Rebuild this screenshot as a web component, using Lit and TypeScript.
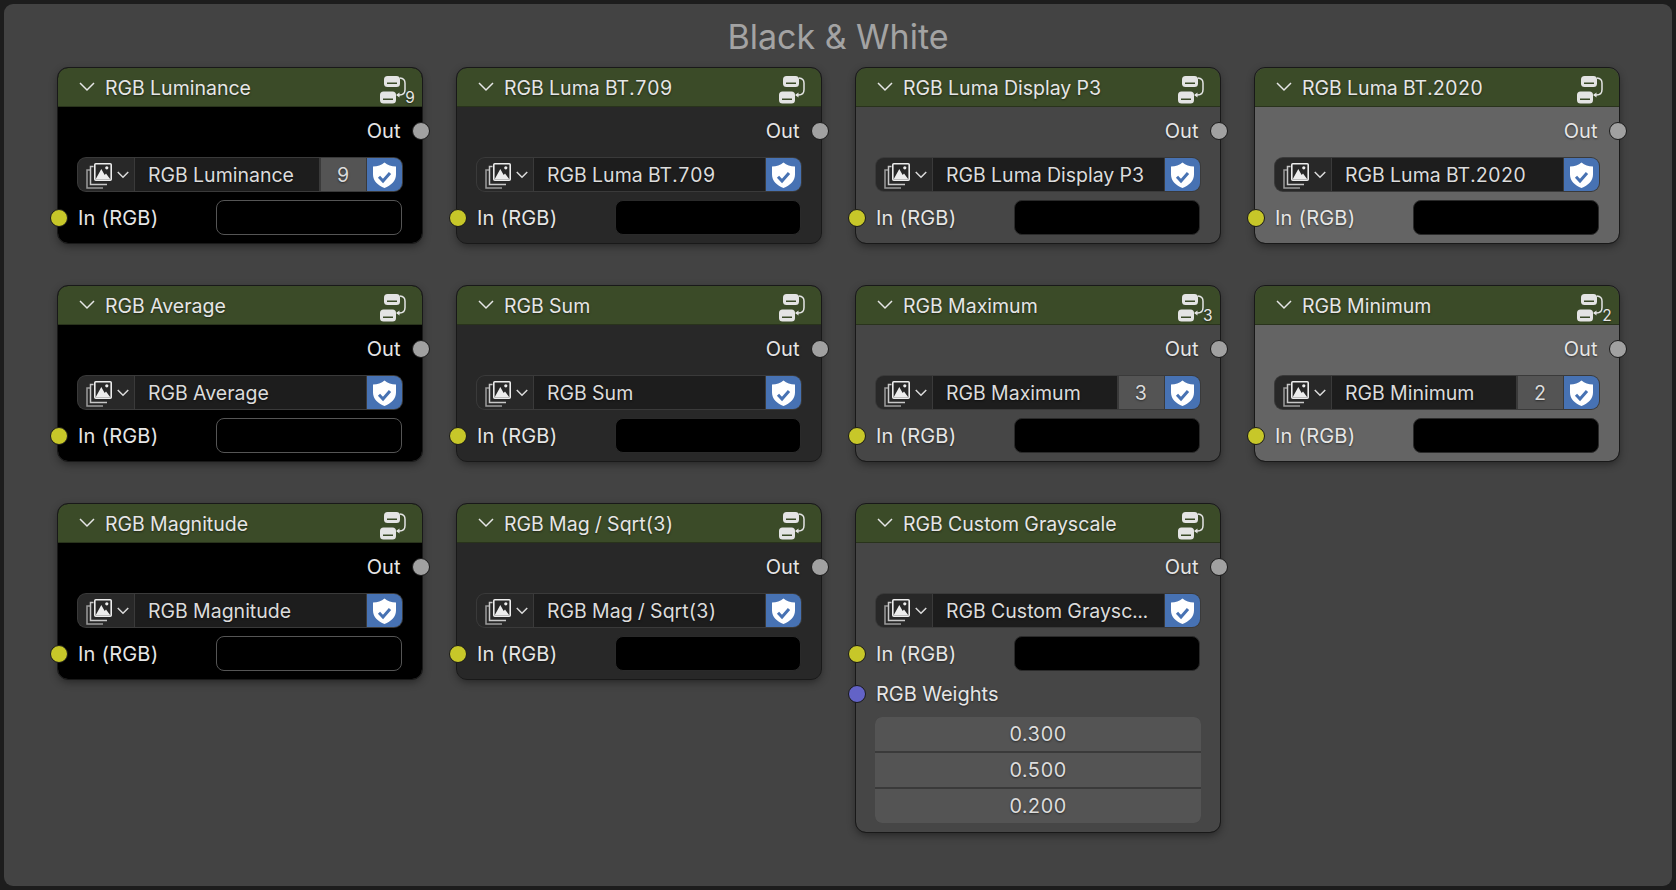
import { LitElement, html, css, svg } from 'lit';
import { customElement, property } from 'lit/decorators.js';

const treeIcon = svg`
  <rect x="5" y="1" width="16" height="11" rx="3.500" fill="#e4e4e4"/>
  <rect x="8" y="7.500" width="10" height="1.500" fill="#3b4b28"/>
  <rect x="1" y="16.500" width="16" height="12" rx="3.500" fill="#e4e4e4"/>
  <rect x="4" y="23.500" width="10" height="1.500" fill="#3b4b28"/>
  <path d="M21 3c3.300.2 5 2.200 5 5.200v6.300c0 3.600-2.300 5.500-5.500 5.500H18" fill="none" stroke="#e4e4e4" stroke-width="1.500"/>
  <path d="M20.500 17.500v5l-3.500-2.500z" fill="#e4e4e4"/>`;

const imageIcon = svg`
  <path d="M4 7H1v18h16" fill="none" stroke="#9c9c9c" stroke-width="1.500"/>
  <path d="M7.500 3.500H4.500v18H21" fill="none" stroke="#c8c8c8" stroke-width="1.500"/>
  <rect x="8.800" y="0.800" width="16.400" height="16.400" rx="1" fill="#282828" stroke="#ededed" stroke-width="1.600"/>
  <path d="M9.500 16.500l5.800-10.500 3.400 6 1.300-1.500 4.500 6z" fill="#ededed"/>
  <circle cx="20.800" cy="4.800" r="1.600" fill="#ededed"/>`;

const shieldIcon = svg`
  <path d="M11.500.5C14.500 3 18.500 4.500 23 4.500v8c0 6.500-5 11-11.500 13.500C5 23.500 0 19 0 12.500v-8C4.500 4.500 8.500 3 11.500.5z" fill="#fff"/>
  <path d="M6 14.800l4 4.200 7-8" fill="none" stroke="#4772b3" stroke-width="3"/>`;

const chevron = svg`<path d="M1 1l7 7 7-7" fill="none" stroke="currentColor" stroke-width="1.500"/>`;

@customElement('rgb-node')
export class RgbNode extends LitElement {
  static styles = css`
    :host {
      display: block;
    }
    .node {
      position: relative;
      border-radius: 10px;
      outline: 1.5px solid #191919;
      box-shadow: 0 3px 9px rgba(0, 0, 0, 0.45);
      color: #e6e6e6;
      font-size: 20px;
      font-variant-numeric: tabular-nums;
      text-shadow: 0 1px 2px rgba(0, 0, 0, 0.5);
    }
    .tone-0 { background: #000; }
    .tone-1 { background: #282828; }
    .tone-2 { background: #464646; }
    .tone-3 { background: #646464; }
    .head {
      height: 39px;
      box-sizing: border-box;
      display: flex;
      align-items: center;
      padding-left: 21px;
      background: #3b4b28;
      border-bottom: 1px solid #29331c;
      border-radius: 10px 10px 0 0;
      font-size: 19.5px;
    }
    .chev {
      width: 16px;
      height: 10px;
      margin-right: 10px;
      flex: none;
    }
    .head-title {
      flex: 1;
      padding-top: 1px;
    }
    .tree {
      width: 28px;
      height: 30px;
      margin-right: 15px;
      margin-top: 5px;
    }
    .users {
      position: absolute;
      top: 22px;
      right: 7px;
      font-size: 15.5px;
      line-height: 16px;
    }
    .body {
      padding: 7px 19.5px 8px 19px;
      display: flex;
      flex-direction: column;
    }
    .row {
      position: relative;
      height: 34px;
      display: flex;
      align-items: center;
    }
    .row.out {
      justify-content: flex-end;
      padding-right: 2px;
    }
    .socket {
      position: absolute;
      width: 16px;
      height: 16px;
      top: 50%;
      margin-top: -9px;
      border: 1px solid #1a1a1a;
      border-radius: 50%;
    }
    .socket.right { right: -27.5px; background: #a1a1a1; }
    .socket.left { left: -27px; background: #c7c729; }
    .socket.vector { background: #6363c7; }
    .picker {
      height: 35px;
      box-sizing: border-box;
      margin-top: 9px;
      padding: 1px;
      display: flex;
      gap: 1px;
      border-radius: 9px;
      background: #3a3a3a;
      color: #dcdcdc;
      font-size: 19.5px;
    }
    .picker > div {
      display: flex;
      align-items: center;
      box-sizing: border-box;
    }
    .pick-icon {
      width: 56px;
      flex: none;
      padding-left: 8px;
      gap: 5px;
      background: #282828;
      border-radius: 8px 0 0 8px;
    }
    .pick-icon .img {
      width: 26px;
      height: 26px;
      flex: none;
      margin-top: 3px;
    }
    .pick-icon .caret {
      width: 12px;
      height: 8px;
      flex: none;
    }
    .caret path {
      stroke-width: 2;
    }
    .pick-name {
      flex: 1;
      min-width: 0;
      padding-left: 13px;
      background: #1d1d1d;
      white-space: nowrap;
    }
    .pick-num {
      width: 45px;
      flex: none;
      justify-content: center;
      background: #545454;
      margin-left: 1px;
    }
    .pick-shield {
      width: 35px;
      flex: none;
      justify-content: center;
      background: #4772b3;
      border-radius: 0 8px 8px 0;
    }
    .pick-shield svg {
      width: 23px;
      height: 26px;
    }
    .in-row {
      height: 35px;
      margin-top: 8px;
      display: flex;
      align-items: center;
      justify-content: space-between;
      padding-left: 1px;
      letter-spacing: 0.2px;
    }
    .swatch {
      width: 186px;
      height: 35px;
      box-sizing: border-box;
      background: #000;
      border: 1.5px solid #2a2a2a;
      border-radius: 8px;
    }
    .tone-0 .swatch {
      border-color: #555;
    }
    .weights-label {
      height: 35px;
      margin-top: 5px;
      padding-left: 1px;
    }
    .weights {
      margin-top: 6px;
      margin-bottom: 1px;
      border-radius: 7px;
      overflow: hidden;
      display: flex;
      flex-direction: column;
      gap: 2px;
      background: #3a3a3a;
      color: #dcdcdc;
    }
    .weights div {
      height: 34px;
      display: flex;
      align-items: center;
      justify-content: center;
      background: #545454;
    }
  `;

  @property() name = '';
  @property() field = '';
  @property({ type: Number }) tone = 0;
  @property({ type: Number }) users = 0;
  @property({ type: Array }) weights: string[] = [];

  render() {
    const label = this.field || this.name;
    return html`
      <div class="node tone-${this.tone}">
        <div class="head">
          <svg class="chev" viewBox="0 0 16 10">${chevron}</svg>
          <span class="head-title">${this.name}</span>
          <svg class="tree" viewBox="0 0 28 30">${treeIcon}</svg>
          ${this.users ? html`<span class="users">${this.users}</span>` : ''}
        </div>
        <div class="body">
          <div class="row out">Out<span class="socket right"></span></div>
          <div class="picker">
            <div class="pick-icon">
              <svg class="img" viewBox="0 0 26 26">${imageIcon}</svg>
              <svg class="caret" viewBox="0 0 16 10">${chevron}</svg>
            </div>
            <div class="pick-name">${label}</div>
            ${this.users ? html`<div class="pick-num">${this.users}</div>` : ''}
            <div class="pick-shield">
              <svg viewBox="0 0 23 26">${shieldIcon}</svg>
            </div>
          </div>
          <div class="row in-row">
            In (RGB)<span class="socket left"></span>
            <div class="swatch"></div>
          </div>
          ${this.weights.length
            ? html`
                <div class="row weights-label">RGB Weights<span class="socket left vector"></span></div>
                <div class="weights">${this.weights.map((w) => html`<div>${w}</div>`)}</div>
              `
            : ''}
        </div>
      </div>
    `;
  }
}

type NodeData = { name: string; field?: string; users?: number; weights?: string[] };

const nodes: NodeData[] = [
  { name: 'RGB Luminance', users: 9 },
  { name: 'RGB Luma BT.709' },
  { name: 'RGB Luma Display P3' },
  { name: 'RGB Luma BT.2020' },
  { name: 'RGB Average' },
  { name: 'RGB Sum' },
  { name: 'RGB Maximum', users: 3 },
  { name: 'RGB Minimum', users: 2 },
  { name: 'RGB Magnitude' },
  { name: 'RGB Mag / Sqrt(3)' },
  { name: 'RGB Custom Grayscale', field: 'RGB Custom Graysc...', weights: ['0.300', '0.500', '0.200'] },
];

@customElement('app-root')
export class AppRoot extends LitElement {
  static styles = css`
    :host {
      display: block;
      width: 1676px;
      height: 890px;
      box-sizing: border-box;
      padding: 4px;
      background: #1d1d1d;
      font-family: Inter, 'Liberation Sans', sans-serif;
    }
    .frame {
      height: 100%;
      box-sizing: border-box;
      padding: 13px 54px 0;
      background: #434343;
      border-radius: 9px;
    }
    .title {
      height: 40px;
      line-height: 40px;
      margin-bottom: 11px;
      text-align: center;
      font-size: 34px;
      color: #a3a3a3;
    }
    .grid {
      display: grid;
      grid-template-columns: repeat(4, 364px);
      column-gap: 35px;
      row-gap: 43px;
      align-items: start;
    }
  `;

  render() {
    return html`
      <div class="frame">
        <div class="title">Black &amp; White</div>
        <div class="grid">
          ${nodes.map(
            (n, i) => html`<rgb-node
              .name=${n.name}
              .field=${n.field ?? ''}
              .users=${n.users ?? 0}
              .weights=${n.weights ?? []}
              .tone=${i % 4}
            ></rgb-node>`
          )}
        </div>
      </div>
    `;
  }
}
